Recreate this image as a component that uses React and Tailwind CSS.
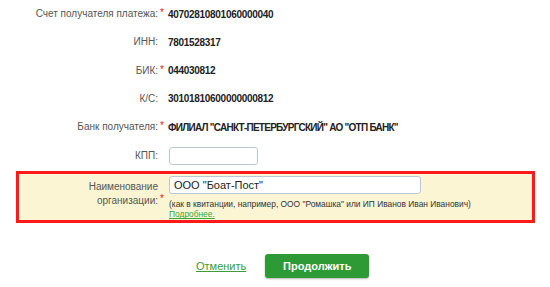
import React from "react";

const rows = [
	{ label: "Счет получателя платежа:", req: true, value: "40702810801060000040", track: "tracking-[-0.3px]" },
	{ label: "ИНН:", req: false, value: "7801528317", track: "tracking-[-0.3px]" },
	{ label: "БИК:", req: true, value: "044030812", track: "tracking-[-0.3px]" },
	{ label: "К/С:", req: false, value: "30101810600000000812", track: "tracking-[-0.3px]" },
	{ label: "Банк получателя:", req: true, value: "ФИЛИАЛ \"САНКТ-ПЕТЕРБУРГСКИЙ\" АО \"ОТП БАНК\"", track: "tracking-[-0.75px]" },
];

function Star({ show }) {
	return (
		<span className="w-[10px] shrink-0 self-start pl-[2px] text-[10px] leading-none text-[#e02020]">
			{show ? "*" : ""}
		</span>
	);
}

export default function App() {
	return (
		<div className="w-[550px] h-[287px] bg-white font-['Liberation_Sans',Arial,sans-serif] overflow-hidden">
			<div className="flex flex-col">
				{rows.map((r) => (
					<div key={r.label} className="flex items-center h-[28.25px]">
						<div className="flex items-start w-[168px] shrink-0">
							<span className="w-[158px] text-right text-[10px] leading-[12px] text-[#555]">{r.label}</span>
							<Star show={r.req} />
						</div>
						<span className={`text-[10px] font-bold text-[#222] ${r.track}`}>{r.value}</span>
					</div>
				))}

				<div className="flex items-center h-[28px] pt-[1px]">
					<div className="flex items-start w-[169px] shrink-0">
						<span className="w-[158px] text-right text-[10px] leading-[12px] text-[#555]">КПП:</span>
					</div>
					<input className="w-[89px] h-[18px] rounded-[3px] border border-[#b9c8d6] bg-white outline-none" />
				</div>

				<div className="mt-[2px] ml-[16px] w-[519px] h-[52px] border-[3px] border-[#ff1a1a] bg-[#fbf5d3] flex">
					<div className="flex items-start w-[150px] shrink-0 pt-[6px]">
						<span className="w-[139px] text-right text-[10px] leading-[14px] text-[#555]">
							Наименование
							<br />
							организации:
						</span>
						<span className="w-[11px] pl-[2px] pt-[14px] text-[10px] leading-none text-[#e02020]">*</span>
					</div>
					<div className="flex flex-col pt-[2px]">
						<input
							className="w-[252px] h-[18px] rounded-[3px] border border-[#b9c8d6] bg-white px-[4px] text-[11px] text-[#222] outline-none"
							defaultValue={'ООО "Боат-Пост"'}
						/>
						<span className="mt-[5px] text-[8.4px] leading-[10px] text-[#333]">
							(как в квитанции, например, ООО "Ромашка" или ИП Иванов Иван Иванович)
						</span>
						<a href="#" className="text-[8.4px] leading-[10px] text-[#3aa53a] underline">Подробнее.</a>
					</div>
				</div>

				<div className="flex items-center mt-[31px] pl-[196px] gap-[19px]">
					<a href="#" className="text-[11px] text-[#3b9c3b] underline">Отменить</a>
					<button className="w-[104px] h-[24px] rounded-[3px] bg-[#2e9a35] text-white text-[11px] font-bold shadow-[0_1px_2px_rgba(0,0,0,0.3)]">
						Продолжить
					</button>
				</div>
			</div>
		</div>
	);
}
